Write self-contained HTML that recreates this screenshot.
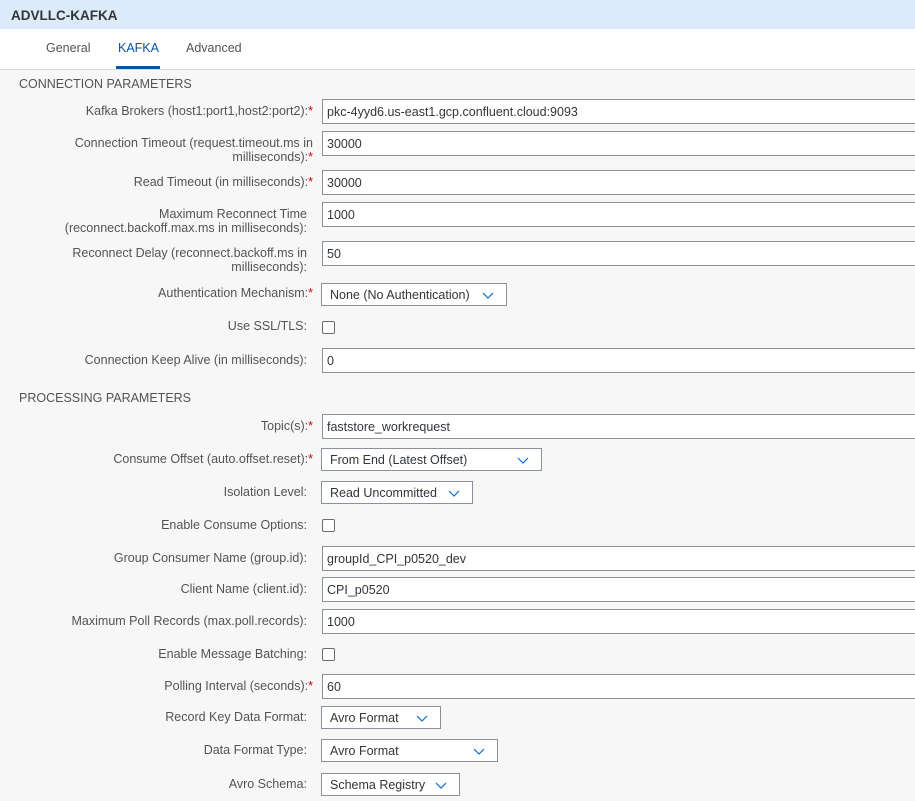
<!DOCTYPE html>
<html><head><meta charset="utf-8"><style>
*{box-sizing:border-box;margin:0;padding:0}
body{width:915px;height:801px;overflow:hidden;background:#f7f7f7;font-family:"Liberation Sans",Arial,sans-serif;font-size:12.5px;color:#32363a;position:relative}
.hdr{position:absolute;left:0;top:0;width:915px;height:29px;background:#dcebf9;font-weight:bold;font-size:13.5px;color:#32363a;padding:8px 0 0 11px}
.tabs{position:absolute;left:0;top:29px;width:915px;height:41px;background:#fff;border-bottom:1px solid #d9d9d9}
.tab{position:absolute;top:12px;font-size:12.5px;color:#515456}
.tab.act{color:#0854a0}
.uline{position:absolute;left:116px;top:37px;width:44px;height:3px;background:#0854a0}
.sec{position:absolute;left:19px;color:#515456}
.lbl{position:absolute;right:602px;text-align:right;line-height:14px;color:#515456;white-space:nowrap}
.lbl.ns{right:608px}
.st{color:#e00000}
.in{position:absolute;left:322px;width:600px;height:25px;background:#fff;border:1px solid #89919a;padding:5px 0 0 4px}
.sel{position:absolute;left:321px;height:23px;background:#fff;border:1px solid #89919a;padding:4px 0 0 8px}
.sel svg{position:absolute;right:12px;top:8px}
.cb{position:absolute;left:322px;width:13px;height:13px;background:#fff;border:1px solid #6a6d70;border-radius:2px}
</style></head><body>
<div class="hdr">ADVLLC-KAFKA</div>
<div class="tabs">
<span class="tab" style="left:46px">General</span>
<span class="tab act" style="left:118px">KAFKA</span>
<span class="tab" style="left:186px">Advanced</span>
<div class="uline"></div>
</div>
<div class="sec" style="top:77px">CONNECTION PARAMETERS</div>

<div class="lbl" style="top:104px">Kafka Brokers (host1:port1,host2:port2):<span class="st">*</span></div>
<div class="in" style="top:99px">pkc-4yyd6.us-east1.gcp.confluent.cloud:9093</div>

<div class="lbl" style="top:136px">Connection Timeout (request.timeout.ms in<br>milliseconds):<span class="st">*</span></div>
<div class="in" style="top:131px">30000</div>

<div class="lbl" style="top:175px">Read Timeout (in milliseconds):<span class="st">*</span></div>
<div class="in" style="top:170px">30000</div>

<div class="lbl ns" style="top:207px">Maximum Reconnect Time<br>(reconnect.backoff.max.ms in milliseconds):</div>
<div class="in" style="top:202px">1000</div>

<div class="lbl ns" style="top:246px">Reconnect Delay (reconnect.backoff.ms in<br>milliseconds):</div>
<div class="in" style="top:241px">50</div>

<div class="lbl" style="top:286px">Authentication Mechanism:<span class="st">*</span></div>
<div class="sel" style="top:283px;width:186px">None (No Authentication)<svg width="12" height="7"><path d="M1 1l5 5 5-5" fill="none" stroke="#0a6ed1" stroke-width="1.2"/></svg></div>

<div class="lbl ns" style="top:319px">Use SSL/TLS:</div>
<div class="cb" style="top:321px"></div>

<div class="lbl ns" style="top:353px">Connection Keep Alive (in milliseconds):</div>
<div class="in" style="top:348px">0</div>

<div class="sec" style="top:391px">PROCESSING PARAMETERS</div>

<div class="lbl" style="top:419px">Topic(s):<span class="st">*</span></div>
<div class="in" style="top:414px">faststore_workrequest</div>

<div class="lbl" style="top:452px">Consume Offset (auto.offset.reset):<span class="st">*</span></div>
<div class="sel" style="top:448px;width:221px">From End (Latest Offset)<svg width="12" height="7"><path d="M1 1l5 5 5-5" fill="none" stroke="#0a6ed1" stroke-width="1.2"/></svg></div>

<div class="lbl ns" style="top:485px">Isolation Level:</div>
<div class="sel" style="top:481px;width:152px">Read Uncommitted<svg width="12" height="7"><path d="M1 1l5 5 5-5" fill="none" stroke="#0a6ed1" stroke-width="1.2"/></svg></div>

<div class="lbl ns" style="top:518px">Enable Consume Options:</div>
<div class="cb" style="top:519px"></div>

<div class="lbl ns" style="top:551px">Group Consumer Name (group.id):</div>
<div class="in" style="top:546px">groupId_CPI_p0520_dev</div>

<div class="lbl ns" style="top:582px">Client Name (client.id):</div>
<div class="in" style="top:577px">CPI_p0520</div>

<div class="lbl ns" style="top:614px">Maximum Poll Records (max.poll.records):</div>
<div class="in" style="top:609px">1000</div>

<div class="lbl ns" style="top:647px">Enable Message Batching:</div>
<div class="cb" style="top:648px"></div>

<div class="lbl" style="top:679px">Polling Interval (seconds):<span class="st">*</span></div>
<div class="in" style="top:674px">60</div>

<div class="lbl ns" style="top:710px">Record Key Data Format:</div>
<div class="sel" style="top:706px;width:120px">Avro Format<svg width="12" height="7"><path d="M1 1l5 5 5-5" fill="none" stroke="#0a6ed1" stroke-width="1.2"/></svg></div>

<div class="lbl ns" style="top:743px">Data Format Type:</div>
<div class="sel" style="top:739px;width:177px">Avro Format<svg width="12" height="7"><path d="M1 1l5 5 5-5" fill="none" stroke="#0a6ed1" stroke-width="1.2"/></svg></div>

<div class="lbl ns" style="top:777px">Avro Schema:</div>
<div class="sel" style="top:773px;width:139px">Schema Registry<svg width="12" height="7"><path d="M1 1l5 5 5-5" fill="none" stroke="#0a6ed1" stroke-width="1.2"/></svg></div>
</body></html>
